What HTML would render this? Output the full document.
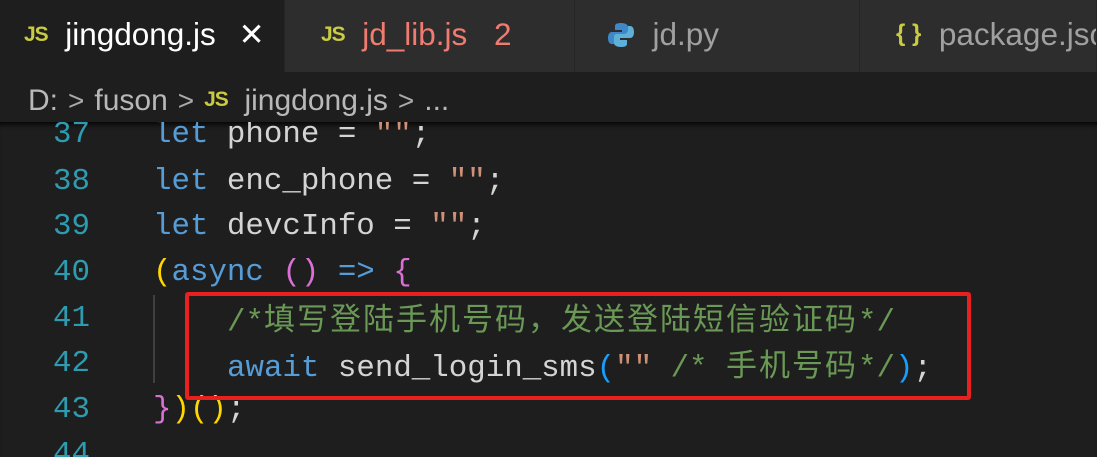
<!DOCTYPE html>
<html><head><meta charset="utf-8"><style>
*{margin:0;padding:0;box-sizing:border-box}
html,body{width:1097px;height:457px;overflow:hidden}
body{background:#1e1e1e;position:relative;font-family:"Liberation Sans","Noto Sans CJK SC",sans-serif}
.tabs{position:absolute;left:0;top:0;width:1097px;height:72px;background:#252526}
.tab{position:absolute;top:0;height:72px;background:#2d2d2d;border-right:1px solid #252526;font-size:31.5px;line-height:68px;color:#a0a0a0;white-space:nowrap;overflow:hidden}
.tab.act{background:#1e1e1e;color:#fff}
.js{font-weight:bold;color:#cbcb41;font-size:21px;position:relative;top:-4px;letter-spacing:-1px}
.crumb{position:absolute;top:72px;left:0;width:1097px;height:50px;background:#1e1e1e;color:#b8b8b8;font-size:30px;line-height:58px;padding-left:28px;white-space:nowrap}
.ch{color:#aaa;font-size:28px;margin:0 10px}
.code{position:absolute;top:122px;left:0;width:1097px;height:335px;box-shadow:inset 0 6px 6px -4px #000;overflow:hidden}
.ln{position:absolute;left:0;width:90px;text-align:right;color:#2e9cb0;font-family:"Liberation Mono",monospace;font-size:30.8px;line-height:36px}
.l{position:absolute;left:153px;font-family:"Liberation Mono","Noto Sans CJK SC",monospace;font-size:30.8px;line-height:36px;color:#d4d4d4;white-space:pre}
.k{color:#569cd6}.s{color:#ce9178}.c{color:#6a9955}.y{color:#ffd700}.p{color:#da70d6}.b{color:#179fff}
.cj{letter-spacing:2px;font-family:"Noto Sans CJK SC",sans-serif;font-size:31px;line-height:36px}
</style></head><body>
<div class="tabs">
<div class="tab act" style="left:0;width:285px;padding-left:24px"><span class="js">JS</span>&nbsp; jingdong.js <span style="margin-left:14px;font-size:31px">✕</span></div>
<div class="tab" style="left:285px;width:290px;padding-left:36px;color:#f07b6f"><span class="js">JS</span>&nbsp; jd_lib.js <span style="margin-left:18px">2</span></div>
<div class="tab" style="left:575px;width:285px;padding-left:32px"><svg width="28" height="28" viewBox="0 0 28 28" style="vertical-align:-4px"><path d="M14 2c-6 0-6 2-6 4v3h7v2H5c-3 0-4 3-4 6s1 6 4 6h2v-4c0-2 2-4 4-4h7c2 0 3-1 3-3V6c0-2-2-4-7-4z" fill="#3f87c8"/><path d="M14 26c6 0 6-2 6-4v-3h-7v-2h10c3 0 4-3 4-6s-1-6-4-6h-2v4c0 2-2 4-4 4h-7c-2 0-3 1-3 3v6c0 2 2 4 7 4z" fill="#5fb0d8"/></svg>&nbsp; jd.py</div>
<div class="tab" style="left:860px;width:237px;padding-left:36px"><span style="color:#cbcb41;font-weight:bold;font-size:24px;position:relative;top:-4px">{ }</span>&nbsp; package.json</div>
</div>
<div class="crumb">D:<span class="ch">&gt;</span>fuson<span class="ch">&gt;</span><span class="js">JS</span>&nbsp; jingdong.js<span class="ch">&gt;</span>...</div>
<div class="code">
<div style="position:absolute;left:153px;top:173px;width:2px;height:88px;background:#404040"></div>
<div class="ln" style="top:-5px">37</div><div class="l" style="top:-5px"><span class="k">let</span> phone = <span class="s">""</span>;</div>
<div class="ln" style="top:42px">38</div><div class="l" style="top:42px"><span class="k">let</span> enc_phone = <span class="s">""</span>;</div>
<div class="ln" style="top:87px">39</div><div class="l" style="top:87px"><span class="k">let</span> devcInfo = <span class="s">""</span>;</div>
<div class="ln" style="top:133px">40</div><div class="l" style="top:133px"><span class="y">(</span><span class="k">async</span> <span class="p">()</span> <span class="k">=&gt;</span> <span class="p">{</span></div>
<div class="ln" style="top:179px">41</div><div class="l" style="top:177px;left:227px"><span class="c">/*<span class="cj">填写登陆手机号码，发送登陆短信验证码</span>*/</span></div>
<div class="ln" style="top:224px">42</div><div class="l" style="top:223px;left:227px"><span class="k">await</span> send_login_sms<span class="b">(</span><span class="s">""</span> <span class="c">/* <span class="cj">手机号码</span>*/</span><span class="b">)</span>;</div>
<div class="ln" style="top:270px">43</div><div class="l" style="top:270px"><span class="p">}</span><span class="y">)()</span>;</div>
<div class="ln" style="top:315px">44</div>
<div style="position:absolute;left:185px;top:170px;width:786px;height:108px;border:4px solid #e8201e;border-radius:3px"></div>
</div>
</body></html>
